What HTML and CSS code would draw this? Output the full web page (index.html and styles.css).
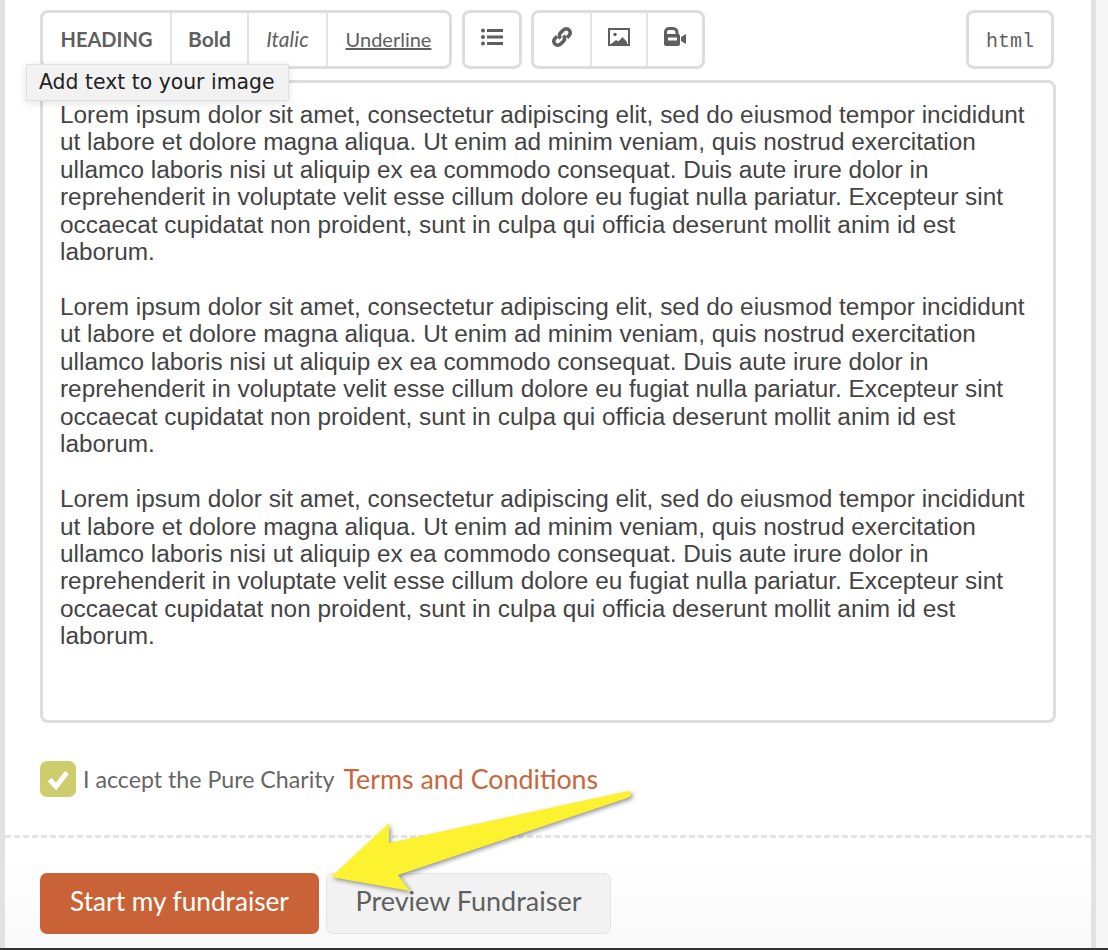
FILE: index.html
```html
<!DOCTYPE html>
<html lang="en">
<head>
  <meta charset="UTF-8" />
  <title>Start a fundraiser</title>
  <link rel="stylesheet" href="styles.css">
</head>
<body>

<div class="card">
  <div class="toolbar">
    <div class="btn-group">
      <button class="tool tool-heading">HEADING</button>
      <button class="tool tool-bold">Bold</button>
      <button class="tool tool-italic">Italic</button>
      <button class="tool tool-underline">Underline</button>
    </div>
    <div class="btn-group">
      <button class="tool tool-icon tool-list" aria-label="List">
        <svg width="22" height="18" viewBox="0 0 22 18"><circle cx="2" cy="2.500" r="2"/><circle cx="2" cy="9" r="2"/><circle cx="2" cy="15.500" r="2"/><path d="M6 1h16v3h-16zM6 7.500h16v3h-16zM6 14h16v3h-16z"/></svg>
      </button>
    </div>
    <div class="btn-group btn-group-media">
      <button class="tool tool-icon" aria-label="Link">
        <svg width="24" height="22" viewBox="0 0 24 22" fill="none" stroke="#5f5f5f" stroke-width="3.600"><g transform="rotate(-45 12 11)"><path d="M9 7h-3a4 4 0 0 0 0 8h4a4 4 0 0 0 4-4"/><path d="M15 15h3a4 4 0 0 0 0-8h-4a4 4 0 0 0-4 4"/></g></svg>
      </button>
      <button class="tool tool-icon" aria-label="Image">
        <svg width="22" height="18" viewBox="0 0 22 18"><path fill="#5f5f5f" fill-rule="evenodd" d="M0 0h22v18h-22zM2 2v14h18v-14z"/><circle cx="7" cy="6.500" r="1.700" fill="#5f5f5f"/><path fill="#5f5f5f" d="M3 16l5-4 2.500 1.500 4-4.500 4.500 5v2z"/></svg>
      </button>
      <button class="tool tool-icon" aria-label="Video">
        <svg width="22" height="19" viewBox="0 0 22 19"><path fill="none" stroke="#5f5f5f" stroke-width="3" d="M1.500 9v-4a3.500 3.500 0 0 1 3.500-3.500h4a4 4 0 0 1 4 4v2"/><path fill="#5f5f5f" fill-rule="evenodd" d="M2 7h12a2 2 0 0 1 2 2v8a2 2 0 0 1-2 2h-12a2 2 0 0 1-2-2v-8a2 2 0 0 1 2-2zM4 10.500v3h9v-3z"/><path fill="#5f5f5f" d="M17 10l5-3v10l-5-3z"/></svg>
      </button>
    </div>
    <div class="btn-group btn-group-html">
      <button class="tool tool-html">html</button>
    </div>
  </div>

  <div class="tooltip">Add text to your image</div>

  <div class="editor">
    <p>Lorem ipsum dolor sit amet, consectetur adipiscing elit, sed do eiusmod tempor incididunt ut labore et dolore magna aliqua. Ut enim ad minim veniam, quis nostrud exercitation ullamco laboris nisi ut aliquip ex ea commodo consequat. Duis aute irure dolor in reprehenderit in voluptate velit esse cillum dolore eu fugiat nulla pariatur. Excepteur sint occaecat cupidatat non proident, sunt in culpa qui officia deserunt mollit anim id est laborum.</p>
    <p>Lorem ipsum dolor sit amet, consectetur adipiscing elit, sed do eiusmod tempor incididunt ut labore et dolore magna aliqua. Ut enim ad minim veniam, quis nostrud exercitation ullamco laboris nisi ut aliquip ex ea commodo consequat. Duis aute irure dolor in reprehenderit in voluptate velit esse cillum dolore eu fugiat nulla pariatur. Excepteur sint occaecat cupidatat non proident, sunt in culpa qui officia deserunt mollit anim id est laborum.</p>
    <p>Lorem ipsum dolor sit amet, consectetur adipiscing elit, sed do eiusmod tempor incididunt ut labore et dolore magna aliqua. Ut enim ad minim veniam, quis nostrud exercitation ullamco laboris nisi ut aliquip ex ea commodo consequat. Duis aute irure dolor in reprehenderit in voluptate velit esse cillum dolore eu fugiat nulla pariatur. Excepteur sint occaecat cupidatat non proident, sunt in culpa qui officia deserunt mollit anim id est laborum.</p>
  </div>

  <label class="terms">
    <span class="checkbox">
      <svg width="36" height="36" viewBox="0 0 36 36"><path d="M9.500 18.500l6.500 7 11-14" fill="none" stroke="#fff" stroke-width="5"/></svg>
    </span>
    <span class="terms-text">I accept the Pure Charity</span>
    <a class="terms-link" href="#">Terms and Conditions</a>
  </label>

  <div class="actions">
    <button class="btn btn-primary">Start my fundraiser</button>
    <button class="btn btn-secondary">Preview Fundraiser</button>
  </div>
</div>

<div class="bottom-edge"></div>

<svg class="arrow" width="1108" height="950" viewBox="0 0 1108 950">
  <path d="M628 791Q632 792 631 795Q630 797 627 798L398 875L410 891L331 877L389 823V843Z" fill="#fdf22f"/>
</svg>

</body>
</html>
```

FILE: styles.css
```css
html, body { margin: 0; padding: 0; }
body { position: relative; width: 1108px; height: 950px; overflow: hidden; background: #f7f7f7; font-family: Lato, "Noto Sans", sans-serif; color: #5f5f5f; }
button { font-family: inherit; color: inherit; background: none; border: none; padding: 0; margin: 0; }

.card { box-sizing: border-box; width: 1096px; height: 948px; padding: 10px 35px 0; background: linear-gradient(#fff 90%, #f9f9f9); border-left: 5px solid #e2e2e2; border-right: 5px solid #e2e2e2; }
.bottom-edge { height: 2px; background: #333; }

.toolbar { display: flex; gap: 10px; margin-right: 2px; }
.btn-group { display: flex; height: 59px; box-sizing: border-box; background: #fff; border: 3px solid #ddd; border-radius: 8px; }
.btn-group-media { margin-left: -1px; }
.btn-group-html { margin-left: auto; }
.tool { display: flex; align-items: center; justify-content: center; height: 53px; box-sizing: border-box; padding-bottom: 2px; border-left: 2px solid #e4e4e4; font-size: 20px; }
.tool:first-child { border-left: none; }
.tool-heading { width: 127px; font-weight: 700; }
.tool-bold { width: 77px; font-weight: 700; font-size: 21px; }
.tool-italic { width: 79px; font-style: italic; font-size: 21px; }
.tool-underline { width: 123px; text-decoration: underline; }
.tool-icon { width: 56px; padding-bottom: 6px; }
.tool-list { width: 54px; }
.tool-list svg { fill: #5f5f5f; }
.tool-html { width: 82px; padding: 3px 0 0; font-family: "Liberation Mono", monospace; font-size: 20px; }

.tooltip { position: absolute; left: 26px; top: 64px; box-sizing: border-box; width: 263px; height: 37px; padding-left: 12px; background: #f2f2f2; border: 1px solid #e0e0e0; box-shadow: 0 2px 8px rgba(0,0,0,0.12); font-family: "DejaVu Sans", sans-serif; font-size: 20.400px; line-height: 35px; color: #222; }

.editor { box-sizing: border-box; height: 643px; margin-top: 11px; padding: 18px 17px 11px; background: #fff; border: 3px solid #ddd; border-radius: 8px; font-family: "Liberation Sans", Arial, sans-serif; font-size: 24.380px; line-height: 27.430px; color: #444; }
.editor p { margin: 0 0 27.430px; }

.terms { display: flex; align-items: center; gap: 7px; margin-top: 38px; height: 36px; }
.checkbox { display: flex; align-items: center; justify-content: center; width: 36px; height: 36px; background: #cdcd6e; border-radius: 7px; }
.terms-text { font-size: 23.200px; color: #666; }
.terms-link { margin-left: 2px; font-size: 26.800px; color: #c9663c; text-decoration: none; }

.actions { display: flex; gap: 7px; margin: 38px -35px 0; padding: 35px 35px 0; border-top: 3px dashed #e4e4e4; }
.btn { height: 61px; box-sizing: border-box; padding-bottom: 6px; border-radius: 7px; }
.btn-primary { width: 279px; background: #c96337; color: #fff; font-size: 26.200px; }
.btn-secondary { width: 285px; background: #f2f2f2; border: 1px solid #e4e4e4; font-size: 27px; }

.arrow { position: absolute; left: 0; top: 0; filter: drop-shadow(2px 2px 2px rgba(0,0,0,0.4)); }
```
